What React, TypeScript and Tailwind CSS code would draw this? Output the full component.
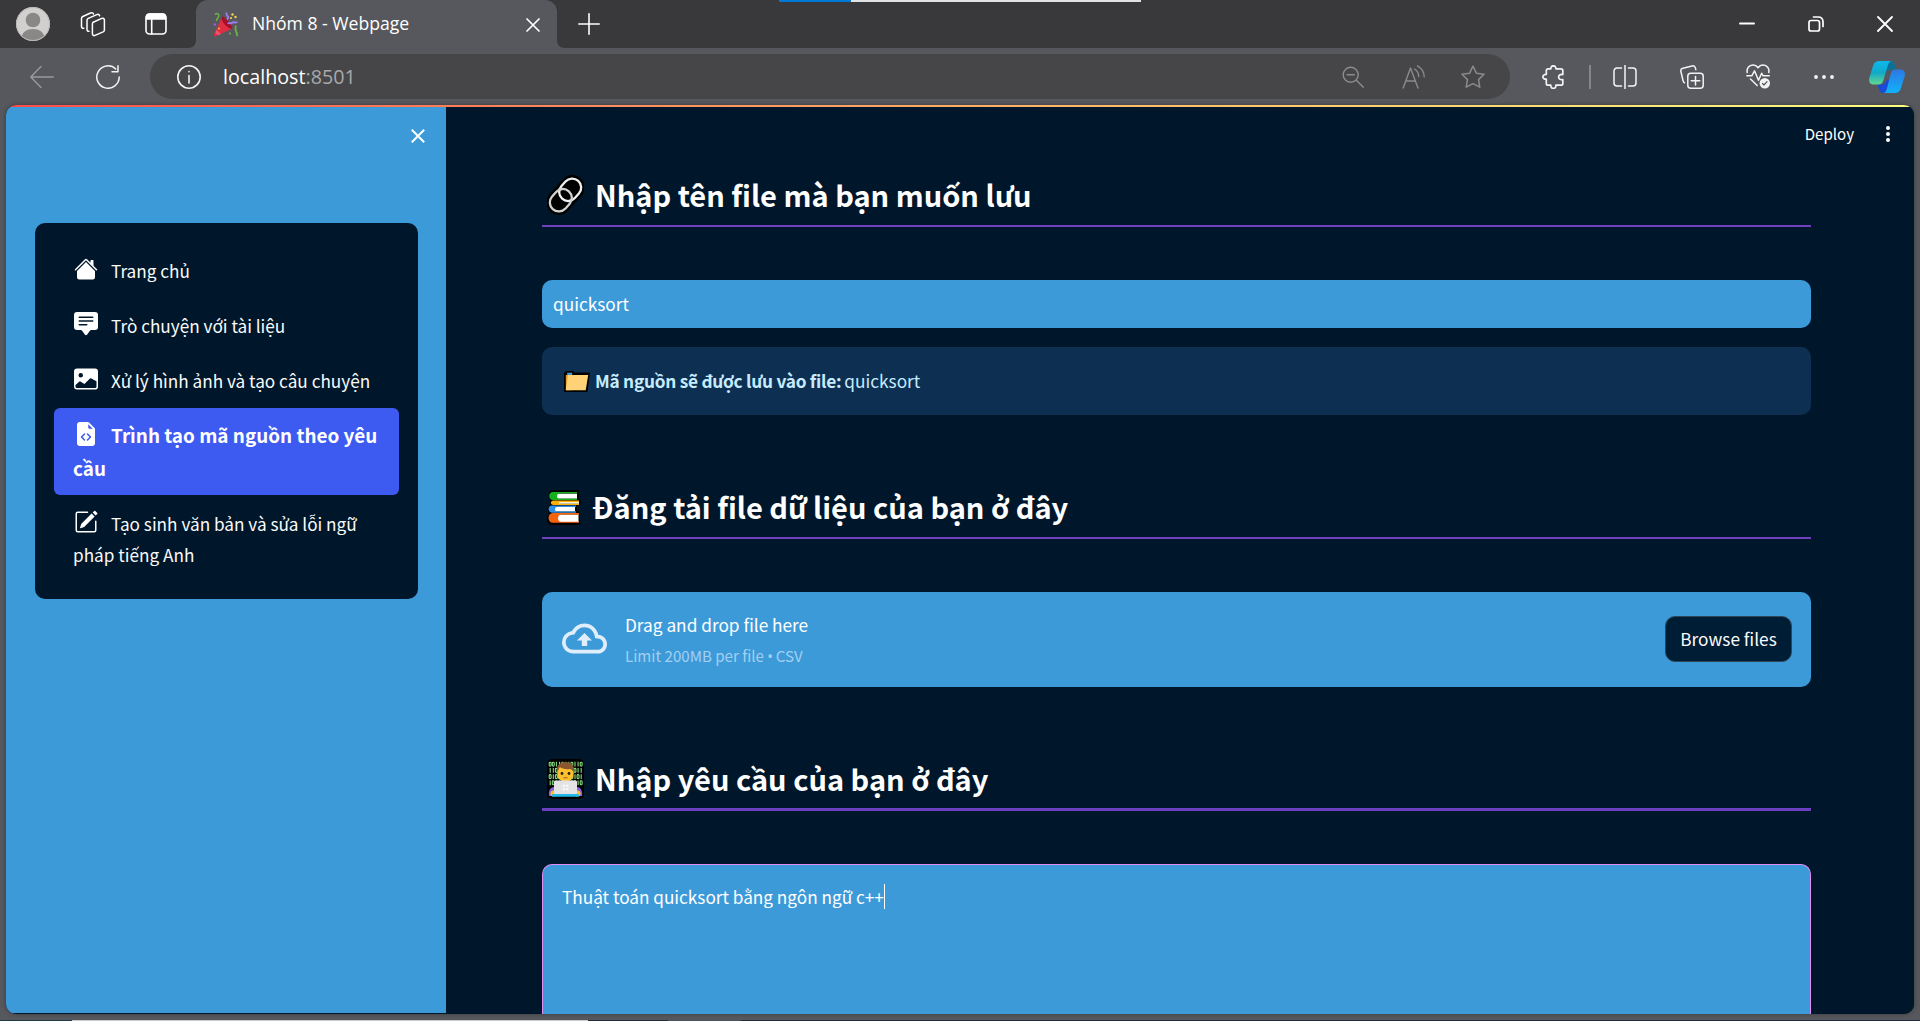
import type { ReactNode } from "react";
import {
  BsChatSquareTextFill,
  BsFileEarmarkCodeFill,
  BsHouseFill,
  BsImageFill,
  BsPencilSquare,
} from "react-icons/bs";
import { MdOutlineCloudUpload } from "react-icons/md";

const line = {
  fill: "none",
  stroke: "currentColor",
  strokeLinecap: "round",
  strokeLinejoin: "round",
} as const;

function Avatar() {
  return (
    <svg viewBox="0 0 34 34" className="h-[34px] w-[34px] shrink-0">
      <defs>
        <clipPath id="avatar-clip">
          <circle cx="17" cy="17" r="17" />
        </clipPath>
      </defs>
      <g clipPath="url(#avatar-clip)">
        <rect width="34" height="34" fill="#d2d0ce" />
        <circle cx="17" cy="13" r="7.3" fill="#8a8886" />
        <path d="M5 34c0-8 4.500-12 12-12s12 4 12 12z" fill="#8a8886" />
      </g>
      <circle cx="17" cy="17" r="16.500" fill="none" stroke="#bcbab8" />
    </svg>
  );
}

function WorkspacesIcon() {
  return (
    <svg viewBox="0 0 26 26" className="h-[26px] w-[26px] shrink-0" {...line} strokeWidth="1.500">
      <path d="M13.200 11.200 21.800 7.400c1.300-.5 2.600.2 2.600 1.700v9.800c0 .9-.5 1.600-1.300 2l-8 3.500c-1.400.6-2.700-.1-2.700-1.600v-9.700c0-.9.3-1.500.8-1.900z" />
      <path d="M9 20.300c-1.300.2-2-.6-2-1.800v-9c0-1 .4-1.700 1.300-2.100l8.500-3.800c1.400-.6 2.400-.1 2.800 1.200" />
      <path d="M3.800 17.200c-1.500.4-2.300-.5-2.300-1.700V7.600c0-1 .4-1.700 1.300-2.100L10.500 2c1.400-.6 2.600-.1 3 1" />
    </svg>
  );
}

function VerticalTabsIcon() {
  return (
    <svg viewBox="0 0 22 22" className="h-[22px] w-[22px] shrink-0" {...line} strokeWidth="1.600">
      <rect x="1" y="1" width="20" height="20" rx="3.500" />
      <path d="M1.500 6V4a3 3 0 0 1 3-3h13a3 3 0 0 1 3 3v2z" fill="currentColor" />
      <path d="M6.700 6v15" />
    </svg>
  );
}

function PartyIcon() {
  return (
    <svg viewBox="0 0 25 25" className="h-[25px] w-[25px] shrink-0">
      <path d="M1 22.500 8.500 6l10 11L2.500 24.300c-1.200.4-2-.6-1.500-1.800z" fill="#dd2e44" />
      <path d="M8.500 6 10 4.500c2 1 7.500 6.500 9.500 11l-1 1.500C15 16.500 9 11 8.500 6z" fill="#a80f2a" />
      <path d="m3.500 18 4.500 4-3 1.300L2.200 21z" fill="#f4546a" />
      <circle cx="6" cy="16.500" r=".9" fill="#ffc83d" />
      <path d="M2 2.500c2-2 4.500-.5 3.700 1.800S3.300 7 3.500 9" fill="none" stroke="#6bb543" strokeWidth="1.400" />
      <path d="M12.500 1c2.500.5.5 2.500 2 3.200s.5 2.300-.5 3.300M15 12c1-2.500 2.500.5 4-1.200s2 .7 5.500-.8" fill="none" stroke="#9d7bea" strokeWidth="1.900" />
      <path d="M22 14c2.500 1-1 2 .7 3.500s-1.200 2 .8 3.200-1 1.800 1 3.300" fill="none" stroke="#6bb543" strokeWidth="1.600" />
      <circle cx="19.500" cy="2.500" r="1.200" fill="#ffd23d" />
      <circle cx="22.500" cy="5" r="1.200" fill="#ffd23d" />
      <circle cx="18" cy="6" r="1.100" fill="#ffd23d" />
      <circle cx="1.800" cy="12.500" r="1.200" fill="#9d5bea" />
      <circle cx="17" cy="21.500" r="1" fill="#6bb543" />
    </svg>
  );
}

function CopilotIcon() {
  return (
    <svg viewBox="0 0 36 32" className="h-[32px] w-[36px] shrink-0">
      <defs>
        <linearGradient id="cp-left" x1="0" y1="0" x2="0" y2="1">
          <stop offset="0" stopColor="#0bb8ee" />
          <stop offset=".5" stopColor="#13a9c8" />
          <stop offset="1" stopColor="#62d88e" />
        </linearGradient>
        <linearGradient id="cp-right" x1="0" y1="0" x2="0" y2="1">
          <stop offset="0" stopColor="#2e77e3" />
          <stop offset="1" stopColor="#10b3fb" />
        </linearGradient>
      </defs>
      <path d="M16 0h5c3 0 4 1.500 4.700 4l1.400 4.500h-4c-3 0-4.500 1.200-5.300 4z" fill="#0b7198" />
      <path d="M8.500 23.500 10 28c.8 2.600 2 4 4.500 4H17l4-13-3-.5-2 3.500c-.8 1.200-1.800 1.500-3.500 1.500z" fill="#1b49d8" />
      <path d="M10.500 0H23c-2 0-3.200 1.500-4 4l-4.700 15.500c-.8 2.800-2.200 4-4.800 4H4.500C1 23.500-.6 20.800.3 17L4 5C5 1.700 7 0 10.500 0z" fill="url(#cp-left)" />
      <path d="M26.500 8.500h5c3.500 0 5.100 2.700 4.200 6.500L32 27c-1 3.300-3 5-6.500 5H14c2 0 3-1.500 3.800-4l4-15.500c.8-2.800 2-4 4.700-4z" fill="url(#cp-right)" />
    </svg>
  );
}

function LinkEmoji() {
  return (
    <svg viewBox="0 0 37 40" className="h-[40px] w-[37px] shrink-0" fill="none">
      <g transform="rotate(-48 18.500 20)">
        <rect x="-4" y="7.500" width="45" height="25" rx="12.500" fill="#000" />
        <rect x="13.500" y="11" width="24" height="18" rx="9" stroke="#f0f0f0" strokeWidth="2.300" />
        <rect x="-.5" y="11" width="24" height="18" rx="9" stroke="#d2d2d2" strokeWidth="2.300" />
      </g>
    </svg>
  );
}

function BooksEmoji() {
  return (
    <svg viewBox="0 0 34 35" className="h-[35px] w-[34px] shrink-0">
      <path d="M5 0h27v9.500h1.500v4.500L30 15.500v5l3 1.500v13H4.500C1.500 35 0 32 0 29.500c0-2.500 1-4 2.500-5.500C0 21 0 17 3 14.500V9.500C1 6 1.500 1 5 0z" fill="#000" />
      <path d="M6 2h24v1.500H12v5h18V10H6c-5 0-5-8 0-8z" fill="#16b01c" />
      <path d="M12 3.700h18v4.700H12c-2.600 0-2.600-4.700 0-4.700z" fill="#fff" />
      <path d="M6.500 10.500H32V12H13v1.700h19v1.300H6.500c-3.500 0-3.500-4.500 0-4.500z" fill="#fcaf0b" />
      <path d="M13 12h19v1.800H13c-1.600 0-1.600-1.800 0-1.800z" fill="#fff3cf" />
      <path d="M5 15.500h24V17H9.500v4.200H29v1.500H5c-4.600 0-4.600-7.200 0-7.200z" fill="#2f8fe6" />
      <path d="M10 17h18v4.300H10c-2.600 0-2.600-4.300 0-4.300z" fill="#fff" />
      <path d="M6 23h26v1.800H14V31h18v1.800H6c-6 0-6-9.800 0-9.800z" fill="#f4620e" />
      <path d="M14 24.700h17.500v7H14c-4 0-4-7 0-7z" fill="#fff" />
    </svg>
  );
}

const binaryRows = ["00110110110", "11010010011", "01001100101", "10110010010"];

function CoderEmoji() {
  return (
    <svg viewBox="0 0 37 40" className="h-[40px] w-[37px] shrink-0">
      <rect width="37" height="40" rx="5" fill="#000" />
      <g fill="none" stroke="#86e07f" strokeWidth="1.100">
        {binaryRows.map((row, y) =>
          row.split("").map((bit, x) =>
            bit === "0" ? (
              <rect key={`${x}-${y}`} x={2.2 + x * 3.1} y={3.2 + y * 6.2} width="1.900" height="4" rx=".9" />
            ) : (
              <path key={`${x}-${y}`} d={`M${3.2 + x * 3.1} ${2.8 + y * 6.2}v4.800`} />
            ),
          ),
        )}
      </g>
      <path d="M2 37c-1-5 1.500-9 5-9h23c3.500 0 6 4 5 9z" fill="#8661d8" />
      <circle cx="6.500" cy="34.500" r="3" fill="#fcc02e" />
      <circle cx="30.500" cy="34.500" r="3" fill="#fcc02e" />
      <ellipse cx="18.500" cy="14" rx="8.300" ry="9.200" fill="#fcc02e" />
      <path d="M10 13c-1-6 2.500-10 8.500-10 6.500 0 9.500 4.500 8.300 10.500-1-2-2-3-4-3.500-4 .7-8-.4-10-2-.8 2-1.500 3-2.800 5z" fill="#8b5730" />
      <circle cx="15" cy="14.500" r="1.400" fill="#2b2018" />
      <circle cx="22" cy="14.500" r="1.400" fill="#2b2018" />
      <path d="M16.500 18.800h4" stroke="#9c5a1c" strokeWidth="1" />
      <rect x="7" y="21.500" width="23" height="14" rx="1.500" fill="#e3e3e5" />
      <path d="M15.500 25.500h2.600v2.600h-2.600zM18.900 25.500h2.600v2.600h-2.600zM15.500 28.900h2.600v2.600h-2.600zM18.900 28.900h2.600v2.600h-2.600z" fill="#f6f6f6" />
      <rect x="5" y="35" width="27" height="2.800" rx="1" fill="#22b8e8" />
    </svg>
  );
}

function FolderEmoji() {
  return (
    <svg viewBox="0 0 26 21" className="h-[21px] w-[26px] shrink-0">
      <path d="M0 2 2 0h7l1.500 1.500H26L23.500 21H0z" fill="#000" />
      <path d="M1.800 4h6v15.200h-6z" fill="#e3a12a" />
      <path d="M3.200 1.700h5V4h-5z" fill="#4c94c9" />
      <path d="M4 4h20.200l-2.500 15.200H1.800z" fill="#ffd277" />
    </svg>
  );
}

function TabStrip() {
  return (
    <div className="relative flex h-[48px] shrink-0 items-center bg-[#39393c] text-white">
      <div className="absolute left-[779px] top-0 flex h-[2px] w-[362px] bg-[#e2e4e4]">
        <div className="w-[72px] bg-[#0078d7]" />
      </div>
      <div className="flex w-[188px] items-center pl-[16px]">
        <Avatar />
        <div className="ml-[30px]"><WorkspacesIcon /></div>
        <div className="ml-[39px]"><VerticalTabsIcon /></div>
      </div>
      <svg viewBox="0 0 8 8" className="h-2 w-2 self-end text-[#57585d]"><path d="M8 0v8H0c5 0 8-3 8-8z" fill="currentColor" /></svg>
      <div className="flex h-full w-[361px] items-center rounded-t-[12px] bg-[#57585d] pl-[17px] pr-[17px]">
        <PartyIcon />
        <span className="ml-[14px] flex-1 whitespace-nowrap pb-[2px] font-['Open_Sans'] text-[17.600px] leading-6">Nhóm 8 - Webpage</span>
        <svg viewBox="0 0 14 14" className="mt-px h-[14px] w-[14px]" {...line} strokeWidth="1.700"><path d="m1 1 12 12M13 1 1 13" /></svg>
      </div>
      <svg viewBox="0 0 8 8" className="h-2 w-2 self-end text-[#57585d]"><path d="M0 0v8h8C3 8 0 5 0 0z" fill="currentColor" /></svg>
      <svg viewBox="0 0 22 22" className="ml-[13px] h-[22px] w-[22px]" {...line} strokeWidth="1.600"><path d="M11 .8v20.400M.8 11h20.400" /></svg>
      <div className="ml-auto flex items-center pr-[27px]">
        <svg viewBox="0 0 16 16" className="h-4 w-4" {...line} strokeWidth="1.900"><path d="M1 7.500h14" /></svg>
        <svg viewBox="0 0 16 16" className="ml-[53px] h-4 w-4" {...line} strokeWidth="1.700">
          <rect x="1" y="4.500" width="10.500" height="10.500" rx="2" />
          <path d="M5.500 1H10c3 0 5 2 5 5v4.500" />
        </svg>
        <svg viewBox="0 0 16 16" className="ml-[53px] h-4 w-4" {...line} strokeWidth="1.800"><path d="m1 1 14 14M15 1 1 15" /></svg>
      </div>
    </div>
  );
}

function Toolbar() {
  return (
    <div className="flex h-[57px] shrink-0 items-center pl-[30px] pr-[15px] text-[#f3f3f3]">
      <svg viewBox="0 0 24 24" className="h-6 w-6 text-[#98999c]" {...line} strokeWidth="1.400"><path d="M23.200 12H.8M11 1.500.8 12 11 22.500" /></svg>
      <svg viewBox="0 0 24 24" className="ml-[42px] h-6 w-6" {...line} strokeWidth="1.500">
        <path d="M23.200 12A11.200 11.200 0 1 1 19.800 4M22 .8v6h-6" />
      </svg>
      <div className="ml-[30px] flex h-[45px] w-[1360px] items-center rounded-full bg-[#464649] pl-[27px] pr-[25px]">
        <svg viewBox="0 0 24 24" className="h-6 w-6" {...line} strokeWidth="1.600">
          <circle cx="12" cy="12" r="11.200" />
          <path d="M12 10.500V18M12 6.600v.1" />
        </svg>
        <span className="ml-[22px] font-['Open_Sans'] text-[19.700px] leading-7 text-white">
          localhost<span className="text-[#a9a9ab]">:8501</span>
        </span>
        <div className="ml-auto flex items-center text-[#8b8b8d]">
          <svg viewBox="0 0 22 22" className="h-[22px] w-[22px]" {...line} strokeWidth="1.400">
            <circle cx="8.700" cy="8.700" r="7.500" /><path d="m14.300 14.300 7 7M5 8.700h7.400" />
          </svg>
          <svg viewBox="0 0 24 24" className="ml-[38px] h-6 w-6" {...line} strokeWidth="1.400">
            <path d="M1.200 23 8.500 3 16 23M3.700 16h9.800M12.500 4c2.500 1.500 4.200 4.300 4.200 7.500M15.500.8c4 2.300 6.700 6 6.700 11" />
          </svg>
          <svg viewBox="0 0 24 24" className="ml-[35px] h-6 w-6" {...line} strokeWidth="1.500">
            <path d="m12 1.200 3.400 7 7.600 1.100-5.500 5.300 1.300 7.600-6.800-3.600-6.800 3.600 1.300-7.600L1 9.300l7.600-1.100z" />
          </svg>
        </div>
      </div>
      <svg viewBox="0 0 22 24" className="ml-[32px] h-6 w-[22px]" {...line} strokeWidth="1.700">
        <path d="M8.800 3.800c-.3-4 5.400-4 5.100 0h5c1.100 0 1.900.7 1.900 1.800v4c-5.600-1.200-5.600 6.200 0 5v3.800c0 1.100-.8 1.800-1.900 1.800h-5c.5 4.200-5.600 4.200-5.100 0H6.200c-1.200 0-1.900-.7-1.900-1.800v-4.200c-4.600.2-4.600-5 0-4.800V5.600c0-1.100.7-1.800 1.900-1.800z" />
      </svg>
      <div className="ml-[25px] h-6 w-[1.500px] bg-[#858689]" />
      <svg viewBox="0 0 24 24" className="ml-[22px] h-6 w-6" {...line} strokeWidth="1.500">
        <path d="M12 .5v23M8.500 3H4a3 3 0 0 0-3 3v12a3 3 0 0 0 3 3h4.500M15.500 3H20a3 3 0 0 1 3 3v12a3 3 0 0 1-3 3h-4.500" />
      </svg>
      <svg viewBox="0 0 24 24" className="ml-[43px] h-6 w-6" {...line} strokeWidth="1.500">
        <rect x="7.800" y="8.200" width="15.400" height="15" rx="3" />
        <path d="M15.500 11.500v8.500M11.200 15.700h8.600M4.500 17.800c-.8-.4-1.200-1-1.400-1.900L.9 6.500C.5 4.800 1.300 3.600 2.900 3.200L12 .9c1.800-.4 3 .4 3.400 2l.4 1.800" />
      </svg>
      <svg viewBox="0 0 24 25" className="ml-[42px] h-[25px] w-6" {...line} strokeWidth="1.500">
        <path d="M1.200 8.500C.5 4.500 3 1 6.800 1c2.200 0 3.900 1 5.200 2.800C13.300 2 15 1 17.200 1c3.800 0 6.300 3.500 5.600 7.500M.8 11.800h5l2.700-5 4 9.500 3.200-7 1.500 2.500h6M4.500 15l6.700 6.500" />
        <circle cx="18.800" cy="19.300" r="5.200" fill="currentColor" stroke="none" />
        <path d="m16.500 19.500 1.500 1.500 3-3.300" stroke="#55565a" strokeWidth="1.200" />
      </svg>
      <svg viewBox="0 0 20 4" className="ml-[44px] h-1 w-5"><g fill="currentColor"><circle cx="2" cy="2" r="1.900" /><circle cx="10" cy="2" r="1.900" /><circle cx="18" cy="2" r="1.900" /></g></svg>
      <div className="ml-auto"><CopilotIcon /></div>
    </div>
  );
}

const items = [
  { icon: BsHouseFill, label: "Trang chủ" },
  { icon: BsChatSquareTextFill, label: "Trò chuyện với tài liệu" },
  { icon: BsImageFill, label: "Xử lý hình ảnh và tạo câu chuyện" },
  { icon: BsFileEarmarkCodeFill, label: "Trình tạo mã nguồn theo yêu cầu", active: true },
  { icon: BsPencilSquare, label: "Tạo sinh văn bản và sửa lỗi ngữ pháp tiếng Anh" },
];

function Sidebar() {
  return (
    <aside className="mb-px flex w-[440px] shrink-0 flex-col bg-[#3d9ad9] pl-[29px] text-white">
      <div className="flex h-[116px] justify-end pr-[21px] pt-[22px]">
        <svg viewBox="0 0 14 14" className="h-[14px] w-[14px]" {...line} strokeWidth="2" strokeLinecap="butt"><path d="m.8.800 12.400 12.400M13.200.800.800 13.200" /></svg>
      </div>
      <nav className="h-[376px] w-[383px] rounded-[10px] bg-[#00172b] px-[19px] pt-5">
        {items.map(({ icon: Icon, label, active }) => (
          <div
            key={label}
            className={
              active
                ? "mb-px h-[87px] rounded-[6px] bg-[#3d5af1] px-[19px] pt-[10px] text-[18.900px] font-bold leading-[33px]"
                : "min-h-[55px] px-[19px] pt-[11.500px] text-[17.200px] leading-[31.500px] text-[#fafafa]"
            }
          >
            <Icon className="mr-[13px] ml-px inline-block h-6 w-6 align-[-3px] text-white" />
            {label}
          </div>
        ))}
      </nav>
    </aside>
  );
}

function Heading({ icon, children, className }: { icon: ReactNode; children: ReactNode; className?: string }) {
  return (
    <h2 className={`flex h-[41px] items-center whitespace-nowrap pl-[5px] text-[29px] font-bold leading-[39px] ${className ?? ""}`}>
      <span className="mr-[11px] pt-px">{icon}</span>
      <span className="pb-px">{children}</span>
    </h2>
  );
}

function Main() {
  return (
    <main className="flex min-w-0 flex-1 flex-col bg-[#00172b] text-white">
      <div className="flex h-[67px] shrink-0 justify-end pr-[24px] pt-[15px]">
        <span className="text-[15.100px] leading-[22px]">Deploy</span>
        <svg viewBox="0 0 4 16" className="ml-[32px] mt-[4px] h-4 w-1"><g fill="#fff"><circle cx="2" cy="2" r="2" /><circle cx="2" cy="8" r="2" /><circle cx="2" cy="14" r="2" /></g></svg>
      </div>
      <div className="flex min-h-0 w-[1365px] flex-1 flex-col pl-[96px]">
        <Heading icon={<LinkEmoji />}>Nhập tên file mà bạn muốn lưu</Heading>
        <div className="mt-[10px] h-[2px] shrink-0 bg-[#7140bf]" />
        <div className="mt-[53px] flex h-12 shrink-0 items-center rounded-[10px] bg-[#3d9ad9] pl-[11px] text-[17.250px]">quicksort</div>
        <div className="mt-[19px] flex h-[68px] shrink-0 items-center rounded-[10px] bg-[#0d3052] pl-[22px] text-[17.250px] text-[#c7ebff]">
          <FolderEmoji />
          <span className="ml-[5px] font-bold tracking-[-0.250px]">Mã nguồn sẽ được lưu vào file:</span>
          <span className="ml-[3px]">quicksort</span>
        </div>
        <Heading className="mt-[71px]" icon={<BooksEmoji />}>Đăng tải file dữ liệu của bạn ở đây</Heading>
        <div className="mt-[10px] h-[2px] shrink-0 bg-[#7140bf]" />
        <div className="mt-[53px] flex h-[95px] shrink-0 items-center rounded-[10px] bg-[#3d9ad9] pl-5 pr-[19px]">
          <MdOutlineCloudUpload className="mb-[2px] h-[45px] w-[45px] text-[#dfeefa]" />
          <div className="ml-[18px] flex flex-col pt-[2px]">
            <span className="text-[17.250px] leading-[30px]">Drag and drop file here</span>
            <span className="text-[15.100px] leading-[30px] text-[#a3d0f0]">
              Limit 200MB per file <span className="font-['Noto_Sans'] tracking-[-0.500px]">•</span> CSV
            </span>
          </div>
          <button className="mb-[2px] ml-auto h-[46px] w-[127px] rounded-[10px] border border-[#2f4657] bg-[#001d36] text-[17.250px] text-[#fafafa]">Browse files</button>
        </div>
        <Heading className="mt-[71px]" icon={<CoderEmoji />}>Nhập yêu cầu của bạn ở đây</Heading>
        <div className="mt-[9px] h-[3px] shrink-0 bg-[#6c3fc0]" />
        <div className="mt-[53px] flex min-h-0 flex-1 items-start rounded-t-[10px] border border-b-0 border-[#e08cf5] bg-[#3d9ad9] pl-[19px] pt-[19px] text-[17.200px] leading-[25px]">
          Thuật toán quicksort bằng ngôn ngữ c++
          <span className="h-[25px] w-px bg-white" />
        </div>
      </div>
    </main>
  );
}

export default function App() {
  return (
    <div className="flex h-[1021px] w-[1920px] flex-col overflow-hidden bg-[#57585d] font-['Noto_Sans_CJK_SC','Noto_Sans',sans-serif]">
      <TabStrip />
      <Toolbar />
      <div className="mx-[6px] flex h-[909px] shrink-0 flex-col overflow-hidden rounded-[10px] bg-[#00172b] shadow-[0_0_4px_rgba(0,0,0,0.350)]">
        <div className="h-[2px] shrink-0 bg-linear-to-r from-[#ff4b4b] to-[#fffd80]" />
        <div className="flex min-h-0 flex-1">
          <Sidebar />
          <Main />
        </div>
      </div>
      <div className="mt-[6px] flex h-px shrink-0 bg-[#1b2f40]">
        <div className="w-[72px] bg-[#1d3a46]" />
        <div className="w-[516px] bg-[#cccccc]" />
        <div className="ml-[80px] w-[73px] bg-[#44565c]" />
      </div>
    </div>
  );
}
